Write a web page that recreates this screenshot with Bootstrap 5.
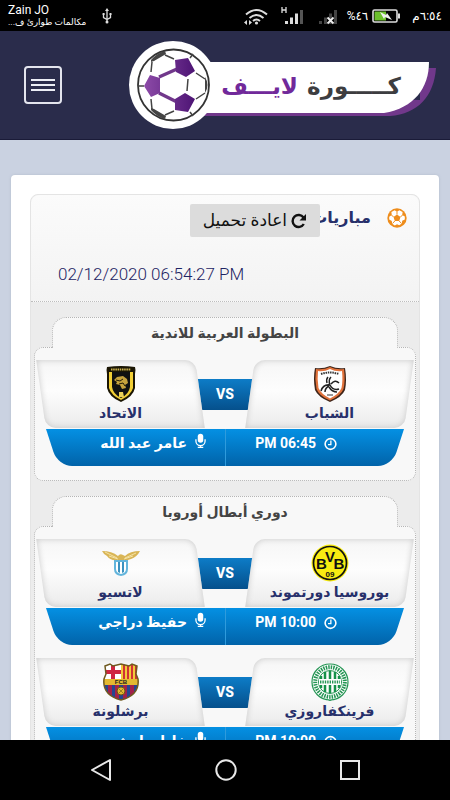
<!DOCTYPE html>
<html lang="ar" dir="rtl">
<head>
<meta charset="utf-8">
<meta name="viewport" content="width=device-width, initial-scale=1">
<title>كورة لايف</title>
<link href="https://cdn.jsdelivr.net/npm/bootstrap@5.3.0/dist/css/bootstrap.min.css" rel="stylesheet">
<style>
  body { font-family: Roboto, "DejaVu Sans", sans-serif; background: #cad2e1; color: #1d2463; }
  .status-bar { height: 31px; font-size: 12px; line-height: 12px; }
  .status-bar .carrier-note { font-size: 9px; }
  .site-header { background: #2a2c4b; height: 109px; border-bottom: 1px solid #1a1b38; padding: 0 13px 0 24px; }
  .menu-btn { width: 38px; height: 38px; border: 2px solid #e4e5ee; border-radius: 4px; }
  .page-scroll { padding: 35px 11px 0; scrollbar-width: none; min-height: 0; }
  .page-scroll::-webkit-scrollbar { display: none; }
  .page-sheet { background: #fff; border-radius: 4px; padding: 19px 19px 0; box-shadow: 0 0 3px #b4bccb; }
  .matches-panel { background: #ececec; border: 1px solid #e4e4e4; border-radius: 8px 8px 0 0; }
  .panel-top { height: 107px; padding: 9px 12px 0; background: linear-gradient(#fbfbfb, #f3f3f3); border-bottom: 1px dotted #bdbdbd; border-radius: 8px 8px 0 0; }
  .panel-title { font-size: 16px; line-height: 28px; font-weight: 700; color: #27306b; }
  .reload-btn { top: 9px; right: 99px; height: 33px; padding: 0 12px; background: #dcdcdc; border-radius: 2px; font-size: 17px; color: #111; white-space: nowrap; }
  .clock-line { font-size: 17px; line-height: 28px; font-weight: 300; padding-left: 15px; }
  .league { margin: 15px 3px 0; }
  .league-name { margin: 0 18px -1px; height: 31px; line-height: 31px; font-size: 14px; font-weight: 700; color: #444; background: #f8f8f8; border: 1px dotted #b5b5b5; border-bottom: 0; border-radius: 14px 14px 0 0; z-index: 1; }
  .league-body { border: 1px dotted #b5b5b5; border-radius: 9px; background: #f8f8f8; padding: 12px 1px 1px; }
  .fixture { margin-bottom: 13px; }
  .team { height: 68px; flex: 1 1 0; z-index: 1; font-size: 14px; line-height: 20px; font-weight: 700; color: #27306b; padding-top: 5px; }
  .team::before { content: ""; position: absolute; inset: 0 5px; z-index: -1; background: linear-gradient(#f6f6f6, #fdfdfd 45%, #ebebeb); box-shadow: inset 0 0 6px #c8c8c8; }
  .team.home::before { transform: skewX(-8deg); border-radius: 10px 0 10px 0; }
  .team.away::before { transform: skewX(8deg); border-radius: 0 10px 0 10px; }
  .team svg { width: 38px; height: 38px; }
  .versus { width: 56px; height: 31px; margin: 0 -8px; line-height: 30px; background: linear-gradient(#0d7cc7, #05508c); color: #fff; font-size: 14px; font-weight: 800; }
  .info-bar { margin: 1px 10px 0; color: #fff; font-size: 14px; line-height: 28px; font-weight: 700; }
  .info-cell { height: 37px; z-index: 0; }
  .info-cell::before { content: ""; position: absolute; inset: 0; z-index: -1; transform-origin: top; background: linear-gradient(#0490e3, #0163a9); }
  .kickoff { padding-right: 67px; }
  .kickoff::before { transform: skewX(-18deg); border-radius: 0 0 14px 0; }
  .commentator { padding-right: 19px; }
  .commentator::before { transform: skewX(18deg); border-radius: 0 0 0 14px; }
  .bar-divider { left: 50%; top: 0; width: 1px; background: #2f9bdc; }
  .phone-nav { height: 60px; padding: 0 90px; }
</style>
<script src="https://cdn.jsdelivr.net/npm/bootstrap@5.3.0/dist/js/bootstrap.bundle.min.js"></script>
</head>
<body class="d-flex flex-column vh-100 overflow-hidden">

<svg class="d-none" aria-hidden="true">
  <symbol id="mic" viewBox="0 0 12 16"><rect x="3" y="0" width="6" height="10" rx="3" fill="#fff"/><path d="M1 6v2a5 5 0 0 0 10 0V6M6 13v2M3 15h6" fill="none" stroke="#fff" stroke-width="1.4"/></symbol>
  <symbol id="clock" viewBox="0 0 14 14"><circle cx="7" cy="7" r="5.8" fill="none" stroke="#fff" stroke-width="1.7"/><path d="M7.4 3.2v4.4H4.3" fill="none" stroke="#fff" stroke-width="1.4"/></symbol>
</svg>

<div class="status-bar bg-black text-white d-flex align-items-center flex-shrink-0 px-2" dir="ltr">
  <div>
    <div>Zain JO</div>
    <div class="carrier-note" dir="rtl">مكالمات طوارئ ف...</div>
  </div>
  <svg class="ms-3" width="10" height="16" viewBox="0 0 10 16" fill="none" stroke="#ddd" stroke-width="1.3"><path d="M5 2v12M1.500 6v3.500L5 11.500 8.500 9.500V6"/><path d="M5 0 3 3h4z" fill="#ddd" stroke="none"/><circle cx="5" cy="14" r="1.500" fill="#ddd" stroke="none"/><path d="M.6 6h2M7.500 6h2" stroke-width="2"/></svg>
  <div class="d-flex align-items-center ms-auto">
    <svg width="100" height="20" viewBox="238 5 100 20">
      <g fill="none" stroke="#ddd" stroke-width="2"><path d="M241 13.500q10.500-9 21 0M244.500 17q7-6 14 0M248 20q3.500-3 7 0"/></g>
      <circle cx="251.500" cy="22" r="1.600" fill="#ddd"/>
      <path d="M239 21.500l3-2.500v5zM247 21.500l-3-2.500v5z" fill="#ddd"/>
      <path d="M277 6v6M281 6v6M277 9h4" stroke="#ddd" stroke-width="1.300"/>
      <path d="M281.500 20v3M286.500 16.500V23M291.500 12.500V23" stroke="#ddd" stroke-width="3"/><path d="M296.500 9v14" stroke="#555" stroke-width="3"/>
      <path d="M315.500 20v3M320.500 16.500V23M325.500 12.500V23M330.500 9v14" stroke="#444" stroke-width="3"/>
      <path d="M322.500 16.500l6 6M328.500 16.500l-6 6" stroke="#eee" stroke-width="1.800"/>
    </svg>
    <span class="ms-1" dir="rtl">٤٦%</span>
    <svg class="mx-1" width="28" height="14" viewBox="0 0 28 14"><rect x="1" y="1" width="24" height="12" rx="1.500" fill="#000" stroke="#ddd" stroke-width="1.600"/><path d="M2.500 2.500H14v9H2.500z" fill="#6cc02c"/><path d="M26 4.500h2v5h-2z" fill="#ddd"/><path d="M8 3l6 3 1-2 5 7-7-3-1 2z" fill="#eee"/></svg>
    <span class="ms-2" dir="rtl">٦:٥٤م</span>
  </div>
</div>

<header class="site-header d-flex align-items-center justify-content-between flex-shrink-0">
  <a href="#" aria-label="كورة لايف" class="d-block">
    <svg class="d-block" width="308" height="90" viewBox="129 40 308 90">
      <defs><linearGradient id="violet"><stop offset="0" stop-color="#8d4ba8"/><stop offset="1" stop-color="#4d1474"/></linearGradient></defs>
      <path d="M175 90V116H390C418 114 434 96 436 68H420V100z" fill="#71388b"/>
      <path d="M170 62H429C429 88 414 108 384 113H170z" fill="#fff"/>
      <circle cx="173" cy="85" r="44" fill="#fff"/>
      <circle cx="173.500" cy="85" r="35.500" fill="#fff" stroke="#333" stroke-width="1.800"/>
      <g fill="#444"><path d="M151 60q6-7 14-9l1 3-12 7-3 1zM151 110q6 7 14 9l1-3-12-7-3-1zM205 77q5 8 0 16z"/></g>
      <g fill="none" stroke="#444" stroke-width="1.500"><path d="M165 55l9 4M152 62l-1 10M138 86h6M151 99l1 10M165 115l9-4M190 58l3-4M190 112l3 4M196 73l9 6M196 99l9-6M188 79l-1 12"/></g>
      <g fill="none" stroke="#71388b" stroke-width="3.500"><path d="M159 77l18-8M159 93l18 9"/></g>
      <g fill="url(#violet)"><path d="M144 86l6-11 10 3v15l-9 4zM175 60l13-2 7 13-9 6-10-5zM175 99l10-6 10 6-7 13-13-2z"/></g>
      <g font-family="DejaVu Sans, sans-serif" font-size="23" font-weight="700" direction="rtl"><text x="401" y="94" fill="#3d3d40">كـــــورة</text><text x="298" y="94" fill="#71299a">لايـــف</text></g>
    </svg>
  </a>
  <button type="button" class="menu-btn btn p-0 d-flex align-items-center justify-content-center" aria-label="القائمة">
    <svg width="24" height="14" viewBox="0 0 24 14" stroke="#eceef5" stroke-width="2"><path d="M0 2h24M0 7h24M0 12h24"/></svg>
  </button>
</header>

<main class="page-scroll flex-grow-1 overflow-auto">
  <div class="page-sheet">
    <section class="matches-panel">
      <div class="panel-top position-relative">
        <div class="d-flex align-items-center">
          <svg width="20" height="20" viewBox="0 0 20 20"><circle cx="10" cy="10" r="9.700" fill="#ee8d1c"/><path d="M7.600 2.200 10 3.800l2.400-1.600 3.200 1.700-.4 3 2.600 1.700v2.800l-2.600 1.300-.4 2.800-2.600 1.800L10 16.200l-2.200 1.300-2.600-1.800-.4-2.800-2.600-1.300V8.800l2.600-1.900-.4-3z" fill="#fff"/><path d="M10 6.500l3.500 2.500-1.300 4H7.800L6.500 9z" fill="#ee8d1c"/><path d="M10 3.500v3M15.500 7L13.500 9M4.500 7l2 2M12.200 13l2.300 2.500M7.800 13l-2.300 2.500" stroke="#ee8d1c" stroke-width="1"/></svg>
          <h1 class="panel-title mb-0 me-3">مباريات</h1>
        </div>
        <button type="button" class="reload-btn btn position-absolute d-flex align-items-center gap-1">
          <svg width="16" height="16" viewBox="0 0 16 16"><path d="M12.800 11A6 6 0 1 1 12.500 4.500" fill="none" stroke="#111" stroke-width="2.400"/><path d="M15 1v6.500H8.500z" fill="#111"/></svg>
          <span>اعادة تحميل</span>
        </button>
        <div class="clock-line mt-4 pt-1 text-start" dir="ltr">02/12/2020 06:54:27 PM</div>
      </div>

      <section class="league">
        <h2 class="league-name position-relative text-center">البطولة العربية للاندية</h2>
        <div class="league-body">
          <article class="fixture">
            <div class="d-flex align-items-center">
              <div class="team home position-relative d-flex flex-column align-items-center">
                <svg viewBox="0 0 38 38"><path d="M4 3Q12 4 19 1q7 3 15 2 2 12 0 22-3 7-15 12Q7 32 4 25 2 13 4 3z" fill="#3f2519"/><path d="M5 4q8 1 14-2 6 3 14 2 1.500 12-.5 20-3 7-13.500 11.500Q8 31 5.500 24 3.500 14 5 4z" fill="#e1723b"/><path d="M7 6q6 1 12-2 6 3 12 2 1 10-.5 17Q28 29 19 33.500 10 29 7.500 23 6 14 7 6z" fill="#fff"/><path d="M10 9q9-3 18 0" fill="none" stroke="#333" stroke-width="2" stroke-dasharray="1.500 .8"/><path d="M19 20q-2-5 1-8M19 20q-7-1-9 6M19 20q3 6 9 4M18 21q-4 2-4 6M20 19q4-5 8-1M16 18q-1-4 1-6M18 22q3 5 8 5" fill="none" stroke="#222" stroke-width="1.500"/><path d="M16 30h6" stroke="#333"/></svg>
                <span>الشباب</span>
              </div>
              <div class="versus text-center">VS</div>
              <div class="team away position-relative d-flex flex-column align-items-center">
                <svg viewBox="0 0 38 38"><path d="M5 2q14-2 28 0 1 3 0 7v14q-2 9-14 14Q7 32 5 23V9Q4 5 5 2z" fill="#1b1604"/><path d="M7 7h24v16q-2 7-12 12Q9 30 7 23z" fill="#f2cf36"/><path d="M10 7h18v15q-1 7-9 11-8-4-9-11z" fill="#111"/><path d="M9 4.500h20" stroke="#cdb24d" stroke-width="2" stroke-dasharray="1.500 .7"/><path d="M12 15l3-3 6-1 4 3 1 4-3 2 1 3-4 1-2-4-4-1 1-2z" fill="#c6a23d"/><path d="M14 15l4 1 3-2M17 19l4-1 2 3" fill="none" stroke="#221a06"/><path d="M17 27h4l1 5h-5z" fill="#ead05a"/></svg>
                <span>الاتحاد</span>
              </div>
            </div>
            <div class="info-bar position-relative row g-0">
              <div class="info-cell kickoff col-6 position-relative d-flex"><svg class="mt-2 ms-2" width="13" height="14"><use href="#clock"/></svg>06:45 PM</div>
              <div class="info-cell commentator col-6 position-relative d-flex"><svg class="mt-1 ms-2" width="11" height="16"><use href="#mic"/></svg>عامر عبد الله</div>
              <div class="bar-divider position-absolute h-100 p-0"></div>
            </div>
          </article>
        </div>
      </section>

      <section class="league">
        <h2 class="league-name position-relative text-center">دوري أبطال أوروبا</h2>
        <div class="league-body">
          <article class="fixture">
            <div class="d-flex align-items-center">
              <div class="team home position-relative d-flex flex-column align-items-center">
                <svg viewBox="0 0 38 38"><circle cx="19" cy="19" r="18.500" fill="#f8ec12"/><circle cx="19" cy="19" r="16.500" fill="none" stroke="#111" stroke-width="1.700"/><g font-family="Liberation Sans, sans-serif" font-weight="700" fill="#111" text-anchor="middle" direction="ltr"><text x="10.500" y="25" font-size="15">B</text><text x="19" y="18" font-size="15">V</text><text x="28" y="25" font-size="15">B</text><text x="19" y="33" font-size="8">09</text></g></svg>
                <span>بوروسيا دورتموند</span>
              </div>
              <div class="versus text-center">VS</div>
              <div class="team away position-relative d-flex flex-column align-items-center">
                <svg viewBox="0 0 38 38"><path d="M0 7q10 0 16 5 2-3 5-1l2 1Q28 7 38 7q-3 6-9 8-5 2-7 1l-3 3-3-3Q8 17 5 12 2 11 0 7z" fill="#d9b556"/><path d="M3 8l12 6M7 12l9 3M34 9l-11 5M31 12l-9 3" stroke="#f5e3a5" stroke-width="1"/><path d="M12 16h14v9q0 6-7 7-7-1-7-7z" fill="#63b5dc"/><path d="M14 18h10v7q0 4-5 5-5-1-5-5z" fill="#fff"/><path d="M16 18h2v11l-2-1zM20 18h2v10l-2 1z" fill="#3b91bf"/></svg>
                <span>لاتسيو</span>
              </div>
            </div>
            <div class="info-bar position-relative row g-0">
              <div class="info-cell kickoff col-6 position-relative d-flex"><svg class="mt-2 ms-2" width="13" height="14"><use href="#clock"/></svg>10:00 PM</div>
              <div class="info-cell commentator col-6 position-relative d-flex"><svg class="mt-1 ms-2" width="11" height="16"><use href="#mic"/></svg>حفيظ دراجي</div>
              <div class="bar-divider position-absolute h-100 p-0"></div>
            </div>
          </article>
          <article class="fixture">
            <div class="d-flex align-items-center">
              <div class="team home position-relative d-flex flex-column align-items-center">
                <svg viewBox="0 0 38 38"><path d="M15 36h8l-4 2z" fill="#138d48"/><circle cx="19" cy="19" r="18" fill="#fff" stroke="#259554" stroke-width="1.200"/><circle cx="19" cy="19" r="14.800" fill="none" stroke="#259554" stroke-width="4" stroke-dasharray="1.500 1"/><circle cx="19" cy="19" r="11.500" fill="#fff" stroke="#259554"/><path d="M10 13v12M14 9v20M19 8v22M24 9v20M28 13v12" stroke="#159149" stroke-width="2.500"/><path d="M8 16h22v6H8z" fill="#fff"/><path d="M9 19h20" stroke="#259554" stroke-width="3" stroke-dasharray="1.400 1"/></svg>
                <span>فرينكفاروزي</span>
              </div>
              <div class="versus text-center">VS</div>
              <div class="team away position-relative d-flex flex-column align-items-center">
                <svg viewBox="0 0 38 38"><defs><clipPath id="barca"><path d="M3 3l5-2 3 2 8-2 8 2 3-2 5 2-1 8 2 5q2 16-17 21Q0 32 2 16l2-5z"/></clipPath></defs><g clip-path="url(#barca)"><path d="M0 0h38v38H0z" fill="#254690"/><path d="M0 0h19v17H0z" fill="#fff"/><path d="M11 0v17M0 9h19" stroke="#cf2541" stroke-width="4"/><path d="M19 0h19v17H19z" fill="#f2ca3b"/><path d="M22 0v17M26 0v17M30 0v17M34 0v17" stroke="#d13235" stroke-width="2"/><path d="M8 20v18M15 20v18M23 20v18M30 20v18" stroke="#a2214c" stroke-width="4"/><path d="M0 16h38v6H0z" fill="#e4b931"/></g><circle cx="19" cy="28" r="4" fill="#e4b931" stroke="#6b5515"/><path d="M17 26l4 4M21 26l-4 4" stroke="#6b5515" stroke-width=".6"/><path d="M3 3l5-2 3 2 8-2 8 2 3-2 5 2-1 8 2 5q2 16-17 21Q0 32 2 16l2-5z" fill="none" stroke="#705a20" stroke-width="1.500"/><text x="19" y="21" font-family="Liberation Sans, sans-serif" font-size="6" font-weight="700" text-anchor="middle" direction="ltr" fill="#222">FCB</text></svg>
                <span>برشلونة</span>
              </div>
            </div>
            <div class="info-bar position-relative row g-0">
              <div class="info-cell kickoff col-6 position-relative d-flex"><svg class="mt-2 ms-2" width="13" height="14"><use href="#clock"/></svg>10:00 PM</div>
              <div class="info-cell commentator col-6 position-relative d-flex"><svg class="mt-1 ms-2" width="11" height="16"><use href="#mic"/></svg>خليل بلوشي</div>
              <div class="bar-divider position-absolute h-100 p-0"></div>
            </div>
          </article>
        </div>
      </section>
    </section>
  </div>
</main>

<nav class="phone-nav bg-black d-flex align-items-center justify-content-between flex-shrink-0" dir="ltr" aria-label="أزرار الهاتف">
  <button type="button" class="btn p-0 border-0 d-flex" aria-label="رجوع"><svg width="22" height="24" viewBox="0 0 22 24"><path d="M20 2v20L2 12z" fill="none" stroke="#e8e8e8" stroke-width="2" stroke-linejoin="round"/></svg></button>
  <button type="button" class="btn p-0 border-0 d-flex" aria-label="الرئيسية"><svg width="22" height="22" viewBox="0 0 22 22"><circle cx="11" cy="11" r="9.700" fill="none" stroke="#e8e8e8" stroke-width="2"/></svg></button>
  <button type="button" class="btn p-0 border-0 d-flex" aria-label="التطبيقات"><svg width="20" height="20" viewBox="0 0 20 20"><path d="M1 1h18v18H1z" fill="none" stroke="#e8e8e8" stroke-width="2"/></svg></button>
</nav>
</body>
</html>
